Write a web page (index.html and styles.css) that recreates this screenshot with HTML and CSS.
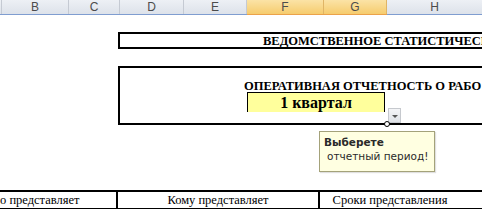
FILE: index.html
```html
<!DOCTYPE html>
<html lang="ru">
<head>
    <meta charset="UTF-8">
    <title>Ведомственное статистическое наблюдение</title>
    <link rel="stylesheet" href="styles.css">
</head>
<body>
    <div class="heads">
        <div class="col col-a"></div>
        <div class="col col-b">B</div>
        <div class="col col-c">C</div>
        <div class="col col-d">D</div>
        <div class="col col-e">E</div>
        <div class="col col-f picked">F</div>
        <div class="col col-g picked">G</div>
        <div class="col col-h">H</div>
    </div>

    <div class="sheet">
        <div class="title-box">ВЕДОМСТВЕННОЕ СТАТИСТИЧЕСК</div>

        <div class="period-box">
            <div class="period-title">ОПЕРАТИВНАЯ ОТЧЕТНОСТЬ О РАБО</div>
            <div class="period-cell">1 квартал</div>
            <div class="drop-btn"><span class="arrow"></span></div>
            <div class="anchor"></div>
            <div class="note">
                <b>Выберете</b>
                <span class="note-text">отчетный период!</span>
            </div>
        </div>

        <div class="info-row">
            <div class="info who">о представляет</div>
            <div class="info whom">Кому представляет</div>
            <div class="info when">Сроки представления</div>
        </div>
    </div>
</body>
</html>
```

FILE: styles.css
```css
body {
    margin: 0;
    width: 482px;
    height: 209px;
    overflow: hidden;
    background-color: #ffffff;
    font-family: "Liberation Serif", "Times New Roman", serif;
}

/* заголовки столбцов */
.heads {
    display: flex;
    height: 14px;
    border-bottom: 1px solid #7f9dd0;
    background: linear-gradient(#edf0f5, #dde2ea);
    font-family: "Liberation Sans", Arial, sans-serif;
    font-size: 12px;
    color: #4c4c4c;
}

.col {
    flex: none;
    text-align: center;
    line-height: 14px;
    border-right: 1px solid #c5cad3;
    box-sizing: border-box;
}

.col-a { width: 2px; }
.col-b { width: 67px; }
.col-c { width: 51px; }
.col-d { width: 64px; }
.col-e { width: 63px; }
.col-f { width: 77px; }
.col-g { width: 63px; }
.col-h { width: 95px; border-right: none; }

.col.picked {
    background: linear-gradient(#fbe3a6, #f6cc6e);
    border-right-color: #e0b566;
    box-shadow: 0 1px 0 #eba24a;
}

.sheet {
    position: relative;
}

.title-box {
    margin: 17px 0 0 118px;
    height: 13px;
    width: 364px;
    box-sizing: content-box;
    border: 2px solid #000;
    border-right: none;
    padding-left: 143px;
    margin-right: -143px;
    font-size: 12.5px;
    font-weight: bold;
    line-height: 14px;
    white-space: nowrap;
}

.period-box {
    position: relative;
    margin: 17px 0 0 118px;
    height: 55px;
    width: 364px;
    border: 2px solid #000;
    border-right: none;
}

.period-title {
    padding: 11px 0 0 124px;
    height: 24px;
    box-sizing: border-box;
    font-size: 12.5px;
    font-weight: bold;
    white-space: nowrap;
}

.period-cell {
    margin-left: 127px;
    width: 138px;
    height: 20px;
    box-sizing: border-box;
    border: 1px solid #000;
    border-bottom: none;
    background-color: #ffff9c;
    text-align: center;
    font-size: 16px;
    font-weight: bold;
    line-height: 20px;
}

.drop-btn {
    position: absolute;
    left: 268px;
    top: 40px;
    width: 13px;
    height: 15px;
    box-sizing: border-box;
    border: 1px solid #c6c9ce;
    background: linear-gradient(#f4f5f7, #dfe2e7);
}

.arrow {
    display: block;
    margin: 6px auto 0;
    width: 0;
    height: 0;
    border-left: 3px solid transparent;
    border-right: 3px solid transparent;
    border-top: 3px solid #555;
}

.anchor {
    position: absolute;
    left: 264px;
    top: 53px;
    width: 4px;
    height: 4px;
    border: 1px solid #000;
    border-radius: 50%;
    background-color: #fff;
}

.note {
    position: absolute;
    left: 199px;
    top: 63px;
    width: 116px;
    height: 41px;
    box-sizing: border-box;
    padding: 3px 4px;
    border: 1px solid #a4a27a;
    background-color: #ffffe1;
    box-shadow: 1px 1px 1px rgba(0, 0, 0, 0.12);
    font-family: "DejaVu Sans", Tahoma, sans-serif;
    font-size: 10.5px;
    line-height: 14px;
    color: #2a2a2a;
}

.note b {
    display: block;
}

.note-text {
    display: block;
    padding-left: 3px;
}

/* строка шапки таблицы */
.info-row {
    display: flex;
    margin-top: 65px;
    height: 16px;
    border-top: 2px solid #000;
    border-bottom: 2px solid #000;
    font-size: 12.5px;
    line-height: 16px;
}

.info {
    flex: none;
    box-sizing: border-box;
    white-space: nowrap;
}

.who {
    width: 118px;
    border-right: 2px solid #000;
}

.whom {
    width: 202px;
    border-right: 2px solid #000;
    text-align: center;
}

.when {
    width: 140px;
    text-align: center;
}
```
